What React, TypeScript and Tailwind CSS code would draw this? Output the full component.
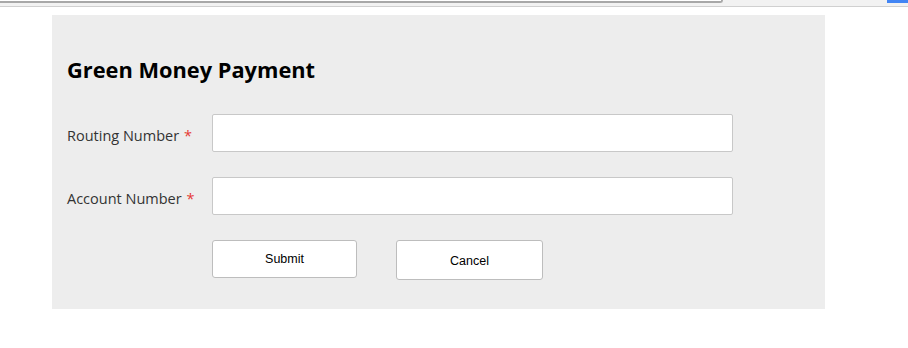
export default function App() {
  return (
    <div className="w-[908px] h-[348px] bg-white overflow-hidden font-['Open_Sans',sans-serif]">
      {/* browser strip */}
      <div className="h-[7px] bg-[#f2f2f2] border-b border-[#d0d0d0] flex items-start">
        <div className="w-[723px] h-[3px] bg-white border-b-2 border-r-2 border-[#a8a8a8] rounded-br-sm" />
        <div className="flex-1" />
        <div className="w-[21px] h-[3px] bg-[#4285f4]" />
      </div>

      <div className="ml-[52px] mt-[8px] w-[773px] h-[294px] bg-[#ededed] pl-[15px] pt-[44px]">
        <h1 className="text-[21.8px] font-bold text-black leading-none">Green Money Payment</h1>

        <div className="mt-[33px] flex flex-col gap-[25px]">
          {["Routing Number", "Account Number"].map((l) => (
            <div key={l} className="flex items-center">
              <label className="w-[145px] text-[14.5px] text-[#333] pt-[7px]">
                {l} <span className="text-[#e53935] ml-[1px]">*</span>
              </label>
              <input
                type="text"
                className="w-[521px] h-[38px] bg-white border border-[#c8c8c8] rounded-[2px] outline-none"
              />
            </div>
          ))}
        </div>

        <div className="mt-[25px] ml-[145px] flex items-start gap-[39px] font-['Liberation_Sans',Arial,sans-serif]">
          <button className="w-[145px] h-[38px] bg-white border border-[#bdbdbd] rounded-[3px] text-[12.5px] text-black pt-[2px]">
            Submit
          </button>
          <button className="w-[147px] h-[40px] bg-white border border-[#bdbdbd] rounded-[3px] text-[12.5px] text-black pt-[3px]">
            Cancel
          </button>
        </div>
      </div>
    </div>
  );
}
